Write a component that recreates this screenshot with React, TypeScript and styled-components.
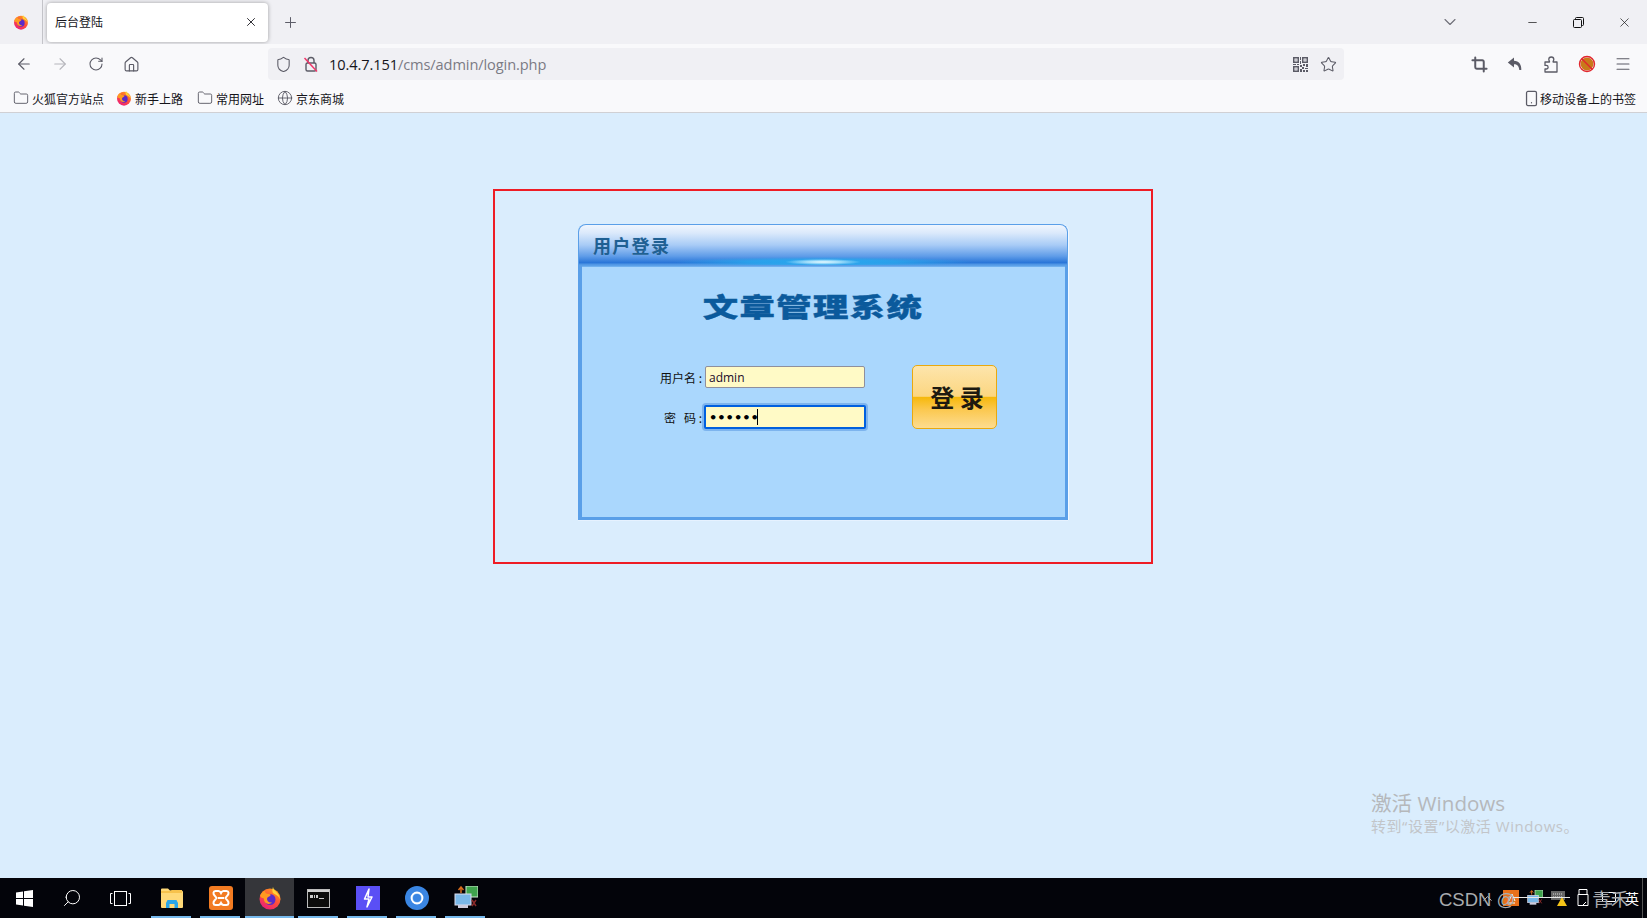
import React from "react";
import styled, { createGlobalStyle } from "styled-components";
import { ArrowLeft, ArrowRight, RotateCw, House, Shield, Star, Menu, Globe, Folder, Smartphone, X, Plus, ChevronDown, Minus, ChevronUp, Search, Crop } from "lucide-react";

const cjk = `"Noto Sans CJK SC", "Noto Sans", sans-serif`;

const Global = createGlobalStyle`
  html, body { margin: 0; padding: 0; height: 100%; overflow: hidden; }
  body { font-family: ${cjk}; background: #daedfd; }
  * { box-sizing: border-box; }
`;

const Shell = styled.div`
  width: 1647px; height: 918px; display: flex; flex-direction: column; overflow: hidden; position: relative;
`;
const TabStrip = styled.div`
  height: 44px; background: #f0f0f4; display: flex; align-items: flex-start; flex: none;
`;
const AppMenu = styled.div`
  width: 43px; height: 44px; display: flex; align-items: center; justify-content: center;
  border-right: 1px solid #c4c4c9; margin-right: 4px;
`;
const Tab = styled.div`
  width: 221px; height: 39px; margin-top: 3px; background: #fff; border-radius: 4px; box-shadow: 0 0 4px rgba(0,0,0,.35);
  display: flex; align-items: center; justify-content: space-between; padding: 0 10px 2px 8px; font-size: 12px; color: #15141a;
`;
const NewTab = styled.div`
  width: 44px; height: 44px; display: flex; align-items: center; justify-content: center; color: #5b5b66;
`;
const StripSpacer = styled.div`flex: 1;`;
const ListTabs = styled.div`
  width: 36px; height: 44px; display: flex; align-items: center; justify-content: center; color: #6e6e78; margin-right: 41px;
`;
const WinBtn = styled.div`
  width: 46px; height: 44px; display: flex; align-items: center; justify-content: center; color: #111;
`;
const NavBar = styled.div`
  height: 40px; background: #f9f9fb; display: flex; align-items: center; flex: none; position: relative;
`;
const NavBtn = styled.div<{ $w?: number; $dim?: boolean }>`
  width: ${p => p.$w ?? 36}px; height: 32px; display: flex; align-items: center; justify-content: center;
  color: ${p => p.$dim ? "#b6b6bc" : "#5b5b66"}; flex: none;
`;
const NavStart = styled.div`width: 6px; flex: none;`;
const UrlBar = styled.div`
  width: 1076px; height: 32px; margin-left: 120px; background: #f0f0f4; border-radius: 4px; display: flex; align-items: center; padding: 0 0 0 6px; flex: none;
`;
const UrlIcon = styled.div<{ $w: number }>`
  width: ${p => p.$w}px; height: 24px; flex: none; display: flex; align-items: center; justify-content: center; color: #5b5b66;
`;
const UrlText = styled.div`
  font-family: "Open Sans", sans-serif; font-size: 14.6px; line-height: 20px; padding-bottom: 1px; color: #15141a; flex: 1; white-space: nowrap; letter-spacing: -.1px;
  span { color: #7b7b84; }
`;
const Tools = styled.div`
  margin-left: 117px; display: flex; align-items: center;
`;
const Bookmarks = styled.div`
  height: 29px; background: #f9f9fb; display: flex; align-items: flex-start; flex: none; padding: 4px 0 0 13px; font-size: 12px; color: #15141a; border-bottom: 1px solid #d0d0d4;
`;
const Mark = styled.div<{ $w: number }>`
  width: ${p => p.$w}px; display: flex; align-items: center; gap: 3px; height: 20px; white-space: nowrap; flex: none; color: #15141a;
  svg { flex: none; color: #5b5b66; }
`;
const MobileMark = styled(Mark)`
  margin-left: auto; margin-right: 16px; gap: 0;
`;
const Page = styled.div`
  flex: 1; position: relative; background: #daedfd; padding: 76px 0 0 493px; min-height: 0;
`;
const RedFrame = styled.div`
  width: 660px; height: 375px; border: 2px solid #ee1c25; padding: 33px 0 0 83px;
`;
const Panel = styled.div`
  width: 490px; height: 296px; display: flex; flex-direction: column; border-radius: 8px 8px 0 0; box-shadow: 1px 0 0 #f4f9ff, 0 1px 0 #e6f2ff;
`;
const PanelHead = styled.div`
  height: 41px; flex: none; border: 1px solid #5a9fe8; border-bottom: 0; border-radius: 8px 8px 0 0;
  background:
    radial-gradient(ellipse 38px 3px at 50% 37px, #eafaff 0%, rgba(200,240,255,.75) 45%, rgba(60,180,240,0) 100%),
    radial-gradient(ellipse 150px 5px at 50% 37px, #29a9ee 0%, rgba(41,169,238,.8) 50%, rgba(41,169,238,0) 100%),
    linear-gradient(#f0f6fe 0%, #dbe9fb 20%, #a8cbf6 50%, #5f9ce8 78%, #2a76d8 94%, #5a9fe8 100%);
  display: flex; align-items: center; padding: 0 0 0 14px;
`;
const PanelTitle = styled.div`
  font-size: 18px; font-weight: 700; color: #1f6093; letter-spacing: 1.3px; line-height: 22px; text-shadow: 0 0 1px #8fb6e4;
`;
const PanelBody = styled.div`
  flex: 1; background: #aad7fd; border: solid #5a9fe8; border-width: 1px 3px 3px 4px; display: flex; flex-direction: column; box-shadow: inset 0 1px 0 #6fb0ef;
`;
const SystemTitle = styled.div`
  height: 38px; margin-top: 21px; padding-right: 20px; display: flex; justify-content: center; align-items: center; flex: none;
`;
const SystemTitleText = styled.span`
  font-size: 26px; font-weight: 900; color: #0b5a9c; letter-spacing: 1px; display: inline-block; transform: scaleX(1.36); line-height: 30px; white-space: nowrap;
  -webkit-text-stroke: .4px #0b5a9c;
`;
const FormRow = styled.div`
  display: flex; margin-top: 40px; padding-left: 71px; align-items: flex-start;
`;
const Fields = styled.div`
  display: flex; flex-direction: column; gap: 18px; width: 259px; flex: none; padding-top: 1px;
`;
const Field = styled.label`
  display: flex; align-items: center; font-size: 12px; color: #111; height: 22px; position: relative;
`;
const FieldLabel = styled.span`
  width: 52px; text-align: right; flex: none; white-space: pre; padding-right: 3px;
`;
const Input = styled.input<{ $focus?: boolean }>`
  height: ${p => p.$focus ? 24 : 22}px; background: #fffac6; padding: 0 3px; outline: none; flex: none;
  font-family: ${p => p.$focus ? '"DejaVu Sans", sans-serif' : '"Open Sans", sans-serif'};
  font-size: ${p => p.$focus ? 13 : 12}px; font-weight: ${p => p.$focus ? 700 : 400}; color: ${p => p.$focus ? "#000" : "#1a0a2a"};
  border-radius: 2px;
  border: ${p => p.$focus ? "2px solid #0060df" : "1px solid #8f8f9d"};
  box-shadow: ${p => p.$focus ? "0 0 0 2px #7db4ee" : "none"};
  margin-left: ${p => p.$focus ? "-1px" : "0"};
  width: ${p => p.$focus ? "162px" : "160px"};
`;
const Caret = styled.i`
  position: absolute; left: 104px; top: 3px; width: 1px; height: 16px; background: #000;
`;
const LoginButton = styled.button`
  width: 85px; height: 64px; flex: none; border: 1px solid #e9a90f; border-radius: 5px; padding: 0 0 2px 5px; margin: 0;
  background: linear-gradient(#fde5ac 0%, #fcd680 49%, #f6b80a 50%, #fbc84f 70%, #fddc90 100%);
  font-family: ${cjk}; font-size: 24px; font-weight: 700; color: #1d1a10;
`;
const Activation = styled.div`
  position: absolute; left: 1371px; bottom: 42px; color: #b5b8bb; font-family: "Open Sans", ${cjk};
`;
const ActTitle = styled.div`font-size: 20.6px; line-height: 26px; white-space: nowrap;`;
const ActSub = styled.div`font-size: 15px; line-height: 20px; color: #c2c5c9; white-space: nowrap; letter-spacing: .55px;`;

const Taskbar = styled.div`
  height: 40px; background: #03040a; display: flex; align-items: stretch; flex: none; position: relative;
`;
const SysBtn = styled.div`
  width: 48px; display: flex; align-items: center; justify-content: center; color: #fff; flex: none;
`;
const SysGap = styled.div`width: 3px; flex: none;`;
const AppItem = styled.div<{ $active?: boolean }>`
  width: 49px; flex: none; display: flex; align-items: center; justify-content: center; position: relative;
  background: ${p => p.$active ? "#35363a" : "transparent"};
  &::after {
    content: ""; position: absolute; bottom: 0; height: 2px; background: #76b9ed;
    left: ${p => p.$active ? 0 : 4}px; right: ${p => p.$active ? 0 : 5}px;
  }
`;
const Tray = styled.div`
  margin-left: auto; display: flex; align-items: center; height: 100%; color: #fff; padding-right: 5px; position: relative;
`;
const TraySlot = styled.div<{ $w: number }>`
  width: ${p => p.$w}px; display: flex; align-items: center; justify-content: center; flex: none; font-size: 14px; color: #fff;
`;
const TrayEdge = styled.div`
  position: absolute; right: 4px; top: 0; bottom: 0; width: 1px; background: #555;
`;
const Watermark = styled.div`
  position: absolute; left: 1439px; top: 7px; font-family: "Liberation Sans", ${cjk}; font-size: 18.5px; color: #a9abae; white-space: nowrap; line-height: 26px; pointer-events: none;
  span { margin-left: 77px; font-family: ${cjk}; }
`;
const Strike = styled.i`
  position: absolute; left: 1513px; top: 19px; width: 57px; height: 1px; background: #e8e8e8;
`;

const Firefox = ({ s = 16 }: { s?: number }) => (
  <svg width={s} height={s} viewBox="0 0 24 24">
    <defs>
      <linearGradient id="ffa" x1="0.8" y1="0" x2="0.2" y2="1">
        <stop offset="0" stopColor="#ffa11a" /><stop offset=".5" stopColor="#ff4f3a" /><stop offset="1" stopColor="#e8197f" />
      </linearGradient>
    </defs>
    <circle cx="12" cy="13" r="10.5" fill="url(#ffa)" />
    <path d="M15 1c.5 3 3 4 5 7s2.500 6 2.500 6c-1-3-3.500-5-6-6S14 4 15 1z" fill="#ffd43a" />
    <circle cx="12" cy="13.500" r="5.500" fill="#5b2bc9" />
    <path d="M2 10c1-3 3-5 5-5 0 2 1 3 4 3 2 0 2 1 1 2-1 .8-3 1-3 3s2 4 5 3.500c-3 3-8 1-8-3 0-1-.5-1.500-1.500-1.500S3 11 2 10z" fill="#ff9a1f" />
  </svg>
);
const Lock = () => (
  <svg width="16" height="18" viewBox="0 0 16 18" fill="none" stroke="#5b5b66" strokeWidth="1.4">
    <path d="M5 8V5.500a3 3 0 0 1 6 0V8" /><rect x="3" y="8" width="10" height="8" rx="1.500" />
    <path d="M1.500 3 14 16.500" stroke="#f0366a" strokeWidth="1.500" />
  </svg>
);
const Qr = () => (
  <svg width="15" height="15" viewBox="0 0 15 15" fill="#5b5b66">
    <path fillRule="evenodd" d="M0 0h6v6H0zM1.500 1.500v3h3v-3zM9 0h6v6H9zM10.500 1.500v3h3v-3zM0 9h6v6H0zM1.500 10.500v3h3v-3z" />
    <path d="M2.500 2.500h1v1h-1zM11.500 2.500h1v1h-1zM2.500 11.500h1v1h-1zM7 0h1v3H7zM7 4h1v3H7zM0 7h3v1H0zM4 7h2v1H4zM7 8h2v2H7zM10 7h2v2h-2zM13 7h2v3h-2zM9 10h2v2H9zM12 11h3v1h-3zM7 12h2v3H7zM10 13h2v2h-2zM13 13h2v2h-2z" />
  </svg>
);
const Reply = () => (
  <svg width="16" height="16" viewBox="0 0 16 16" fill="#5b5b66">
    <path d="M7 1.500 0.800 6.500 7 11.500V8.200c3 0 4.800 1.300 5.300 5.800h2c.3-5.700-2.400-9-7.300-9.300z" />
  </svg>
);
const PuzzleIcon = () => (
  <svg width="16" height="17" viewBox="0 0 16 17" fill="none" stroke="#5b5b66" strokeWidth="1.3" strokeLinejoin="round">
    <path d="M2 6h4.500c.3-.8-.7-1.300-.7-2.500a2.500 2.500 0 0 1 5 0c0 1.200-1 1.700-.7 2.500H14v10H2v-3h1.300a1.800 1.800 0 0 0 0-3.600H2z" />
  </svg>
);
const AddonIcon = () => (
  <svg width="18" height="18" viewBox="0 0 18 18">
    <circle cx="9" cy="9" r="6.500" fill="#c9791a" />
    <circle cx="9" cy="9" r="7.500" fill="none" stroke="#e1262d" strokeWidth="1.400" />
    <path d="M3.800 3.800 14.200 14.200" stroke="#e1262d" strokeWidth="1.400" />
  </svg>
);
const Restore = () => (
  <svg width="11" height="11" viewBox="0 0 11 11" fill="none" stroke="#111" strokeWidth="1">
    <rect x=".5" y="2.500" width="8" height="8" rx="1" /><path d="M2.500 2.500V1.500a1 1 0 0 1 1-1h6a1 1 0 0 1 1 1v6a1 1 0 0 1-1 1h-1" />
  </svg>
);
const WinLogo = () => (
  <svg width="17" height="17" viewBox="0 0 17 17" fill="#fff">
    <path d="M0 2.500 7 1.500v6.500H0zM8 1.300 17 0v8H8zM0 9h7v6.500l-7-1zM8 9h9v8l-9-1.300z" />
  </svg>
);
const TaskView = () => (
  <svg width="21" height="15" viewBox="0 0 21 15" fill="none" stroke="#fff" strokeWidth="1">
    <rect x="4.500" y=".5" width="12" height="14" /><path d="M2.500 2.500H.5v10h2M18.500 2.500h2v10h-2" />
  </svg>
);
const Explorer = () => (
  <svg width="24" height="22" viewBox="0 0 24 22">
    <path d="M1 2.500a1 1 0 0 1 1-1h6l2 2h11.500a1.500 1.500 0 0 1 1.500 1.500v15a1 1 0 0 1-1 1H2a1 1 0 0 1-1-1z" fill="#ffd978" />
    <path d="M1 4h9l2-1h10v3H1z" fill="#f7c24c" />
    <path d="M6 21v-5l1.500-3h9l1.500 3v5h-3.500v-4h-5v4z" fill="#2aa6e8" />
  </svg>
);
const Xampp = () => (
  <svg width="24" height="24" viewBox="0 0 24 24">
    <rect width="24" height="24" rx="3" fill="#f27b22" />
    <path d="M6.500 5h3c1.500 0 2 1 2.500 2 .5-1 1-2 2.500-2h3C20 5 20 8 18.500 9.500L16.500 12l2 2.500C20 16 20 19 17.500 19h-3c-1.500 0-2-1-2.500-2-.5 1-1 2-2.500 2h-3C4 19 4 16 5.500 14.500L7.500 12l-2-2.500C4 8 4 5 6.500 5z" fill="none" stroke="#fff" strokeWidth="2" />
    <path d="M9 12h6" stroke="#fff" strokeWidth="2" />
  </svg>
);
const Terminal = () => (
  <svg width="23" height="19" viewBox="0 0 23 19">
    <rect x=".5" y=".5" width="22" height="18" fill="#0c0c0c" stroke="#bbb" />
    <rect x="1" y="1" width="21" height="2" fill="#d0d0d0" />
    <path d="M3 6h3v3H3zM7 6h1v3H7zM9 6h2v3H9zM12 9h5v1h-5z" fill="#ccc" />
  </svg>
);
const Bolt = () => (
  <svg width="24" height="24" viewBox="0 0 24 24">
    <rect width="24" height="24" fill="#5a4ff5" />
    <path d="M13 3 8.500 13H13l-2 8 5-10h-4z" fill="none" stroke="#fff" strokeWidth="1.500" strokeLinejoin="round" />
  </svg>
);
const Chromium = () => (
  <svg width="24" height="24" viewBox="0 0 24 24">
    <circle cx="12" cy="12" r="12" fill="#3a86e3" />
    <circle cx="12" cy="12" r="5.500" fill="#8fc4f8" stroke="#fff" strokeWidth="1.800" />
    <circle cx="12" cy="12" r="4" fill="#3a86e3" />
  </svg>
);
const NetPc = ({ s = 24 }: { s?: number }) => (
  <svg width={s} height={s} viewBox="0 0 24 24">
    <rect x="12" y="0" width="12" height="11" fill="#3fa34d" stroke="#cfe8d0" />
    <path d="M7 1v6M4.500 4 7 1l2.500 3" stroke="#d96c1c" strokeWidth="1.500" fill="none" />
    <rect x="1" y="8" width="16" height="11" fill="#7ab8e8" stroke="#dde" />
    <rect x="4" y="19" width="10" height="3" fill="#ccd" />
    <path d="M18 14l4 6M22 14l-4 6" stroke="#8a2a2a" strokeWidth="1.500" />
  </svg>
);
const Kbd = () => (
  <svg width="18" height="18" viewBox="0 0 18 18">
    <rect x="1" y="2" width="14" height="9" fill="#666" />
    <path d="M3 5h10M3 8h10" stroke="#ddd" strokeDasharray="1 1" />
    <path d="M12 8l5 9H7z" fill="#f5c518" />
  </svg>
);
const Usb = () => (
  <svg width="14" height="20" viewBox="0 0 14 20" fill="none" stroke="#fff">
    <path d="M3 1.500h8v5H3zM2 6.500h10v11H2z" /><path d="M7 17l3-3" />
  </svg>
);
const Display = () => (
  <svg width="16" height="16" viewBox="0 0 16 16" fill="none" stroke="#fff">
    <path d="M1.500 2.500h13v9h-13zM5 14h6" />
  </svg>
);
const Ban = () => (
  <svg width="16" height="16" viewBox="0 0 16 16"><rect width="16" height="16" fill="#e8701a" /><path d="M4 13h8M6 11l3-7 3 7" stroke="#fff" fill="none" /></svg>
);

export default function App() {
  return (
    <Shell>
      <Global />
      <TabStrip>
        <AppMenu><Firefox /></AppMenu>
        <Tab>
          <span>后台登陆</span>
          <X size={14} strokeWidth={1.5} color="#15141a" />
        </Tab>
        <NewTab><Plus size={17} strokeWidth={1.4} /></NewTab>
        <StripSpacer />
        <ListTabs><ChevronDown size={20} strokeWidth={1.3} /></ListTabs>
        <WinBtn><Minus size={13} strokeWidth={1.3} /></WinBtn>
        <WinBtn><Restore /></WinBtn>
        <WinBtn><X size={15} strokeWidth={1.1} /></WinBtn>
      </TabStrip>
      <NavBar>
        <NavStart />
        <NavBtn><ArrowLeft size={18} strokeWidth={1.5} /></NavBtn>
        <NavBtn $dim><ArrowRight size={18} strokeWidth={1.5} /></NavBtn>
        <NavBtn><RotateCw size={16} strokeWidth={1.6} /></NavBtn>
        <NavBtn $w={34}><House size={17} strokeWidth={1.6} /></NavBtn>
        <UrlBar>
          <UrlIcon $w={18}><Shield size={17} strokeWidth={1.5} /></UrlIcon>
          <UrlIcon $w={37}><Lock /></UrlIcon>
          <UrlText>10.4.7.151<span>/cms/admin/login.php</span></UrlText>
          <UrlIcon $w={28}><Qr /></UrlIcon>
          <UrlIcon $w={28}><Star size={17} strokeWidth={1.5} /></UrlIcon>
          <UrlIcon $w={2} />
        </UrlBar>
        <Tools>
          <NavBtn><Crop size={17} strokeWidth={2.8} /></NavBtn>
          <NavBtn><Reply /></NavBtn>
          <NavBtn><PuzzleIcon /></NavBtn>
          <NavBtn><AddonIcon /></NavBtn>
          <NavBtn><Menu size={18} strokeWidth={1.4} /></NavBtn>
        </Tools>
      </NavBar>
      <Bookmarks>
        <Mark $w={103}><Folder size={16} strokeWidth={1.4} />火狐官方站点</Mark>
        <Mark $w={81}><Firefox />新手上路</Mark>
        <Mark $w={80}><Folder size={16} strokeWidth={1.4} />常用网址</Mark>
        <Mark $w={80}><Globe size={16} strokeWidth={1.4} />京东商城</Mark>
        <MobileMark $w={108}><Smartphone size={17} strokeWidth={1.8} />移动设备上的书签</MobileMark>
      </Bookmarks>
      <Page>
        <RedFrame>
          <Panel>
            <PanelHead><PanelTitle>用户登录</PanelTitle></PanelHead>
            <PanelBody>
              <SystemTitle><SystemTitleText>文章管理系统</SystemTitleText></SystemTitle>
              <FormRow>
                <Fields>
                  <Field>
                    <FieldLabel>用户名 :</FieldLabel>
                    <Input readOnly defaultValue="admin" />
                  </Field>
                  <Field>
                    <FieldLabel>{"密   码 :"}</FieldLabel>
                    <Input $focus readOnly type="password" defaultValue="123456" />
                    <Caret />
                  </Field>
                </Fields>
                <LoginButton>登 录</LoginButton>
              </FormRow>
            </PanelBody>
          </Panel>
        </RedFrame>
        <Activation>
          <ActTitle>激活 Windows</ActTitle>
          <ActSub>转到“设置”以激活 Windows。</ActSub>
        </Activation>
      </Page>
      <Taskbar>
        <SysBtn><WinLogo /></SysBtn>
        <SysBtn><Search size={20} strokeWidth={1.2} style={{ transform: "scaleX(-1)" }} /></SysBtn>
        <SysBtn><TaskView /></SysBtn>
        <SysGap />
        <AppItem><Explorer /></AppItem>
        <AppItem><Xampp /></AppItem>
        <AppItem $active><Firefox s={24} /></AppItem>
        <AppItem><Terminal /></AppItem>
        <AppItem><Bolt /></AppItem>
        <AppItem><Chromium /></AppItem>
        <AppItem><NetPc /></AppItem>
        <Tray>
          <TraySlot $w={24}><ChevronUp size={15} strokeWidth={1.2} /></TraySlot>
          <TraySlot $w={24}><Ban /></TraySlot>
          <TraySlot $w={24}><NetPc s={16} /></TraySlot>
          <TraySlot $w={23}><Kbd /></TraySlot>
          <TraySlot $w={26}><Usb /></TraySlot>
          <TraySlot $w={26}><Display /></TraySlot>
          <TraySlot $w={20}>英</TraySlot>
          <TrayEdge />
        </Tray>
        <Watermark>CSDN @<span>青禾</span></Watermark>
        <Strike />
      </Taskbar>
    </Shell>
  );
}
